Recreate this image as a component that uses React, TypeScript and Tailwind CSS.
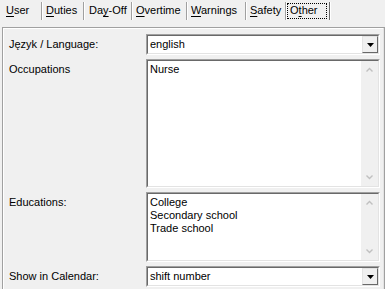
import React from "react";

const U = ({ children }: { children: React.ReactNode }) => <span className="underline underline-offset-[2px]">{children}</span>;

function Tab({ w, pl, children, active }: { w: number; pl: number; children: React.ReactNode; active?: boolean }) {
  return (
    <div className="h-[20px] flex items-center shrink-0" style={{ width: w, paddingLeft: pl }}>
      {active ? (
        <div className="border border-dotted border-black h-[16px] w-[40px] pl-[2px] flex items-center leading-none">{children}</div>
      ) : (
        <span className="leading-none">{children}</span>
      )}
    </div>
  );
}

function Sep({ dark }: { dark?: boolean }) {
  return (
    <div className="flex h-[18px] shrink-0 self-center">
      <div className={dark ? "w-px bg-[#696969]" : "w-px bg-[#a0a0a0]"} />
      <div className="w-px bg-white" />
    </div>
  );
}

function Combo({ text }: { text: string }) {
  return (
    <div className="h-[21px] w-[234px] border-t border-l border-t-[#a0a0a0] border-l-[#a0a0a0] border-b border-r border-b-white border-r-white">
      <div className="h-full w-full border-t border-l border-t-[#696969] border-l-[#696969] border-b border-r border-b-[#e3e3e3] border-r-[#e3e3e3] bg-white flex items-center">
        <div className="flex-1 pl-[2px] leading-none">{text}</div>
        <div className="w-[16px] h-full bg-[#f0f0f0] border-t border-l border-t-[#e3e3e3] border-l-[#e3e3e3] border-b border-r border-b-[#696969] border-r-[#696969] flex items-center justify-center">
          <svg width="7" height="4" viewBox="0 0 7 4"><path d="M0 0H7L3.5 4Z" fill="#000" /></svg>
        </div>
      </div>
    </div>
  );
}

function Chevron({ up }: { up?: boolean }) {
  return (
    <svg width="7" height="5" viewBox="0 0 7 5">
      {up ? (
        <path d="M0.5 4.5L3.5 1.5L6.5 4.5" stroke="#c0c0c0" strokeWidth="1.4" fill="none" />
      ) : (
        <path d="M0.5 0.5L3.5 3.5L6.5 0.5" stroke="#c0c0c0" strokeWidth="1.4" fill="none" />
      )}
    </svg>
  );
}

function ListBox({ h, items }: { h: number; items: string[] }) {
  return (
    <div className="w-[234px] border-t border-l border-t-[#a0a0a0] border-l-[#a0a0a0] border-b border-r border-b-white border-r-white" style={{ height: h }}>
      <div className="h-full w-full border-t border-l border-t-[#696969] border-l-[#696969] border-b border-r border-b-[#e3e3e3] border-r-[#e3e3e3] bg-white flex">
        <div className="flex-1 pl-[2px] pt-[2px] flex flex-col">
          {items.map((t) => (
            <div key={t} className="h-[13px] leading-[13px]">{t}</div>
          ))}
        </div>
        <div className="w-[17px] h-full bg-[#f0f0f0] flex flex-col justify-between">
          <div className="h-[17px] flex items-center justify-center"><Chevron up /></div>
          <div className="h-[17px] flex items-center justify-center"><Chevron /></div>
        </div>
      </div>
    </div>
  );
}

export default function App() {
  return (
    <div className="w-[385px] h-[289px] bg-[#f0f0f0] overflow-hidden text-black text-[11px]" style={{ fontFamily: '"Liberation Sans", Arial, sans-serif' }}>
      <div className="h-[20px] flex items-center pt-[1px]">
        <Tab w={41} pl={6}><U>U</U>ser</Tab>
        <Sep />
        <Tab w={40} pl={3}><U>D</U>uties</Tab>
        <Sep />
        <Tab w={46} pl={4}>Da<U>y</U>-Off</Tab>
        <Sep />
        <Tab w={53} pl={3}><U>O</U>vertime</Tab>
        <Sep />
        <Tab w={57} pl={3}><U>W</U>arnings</Tab>
        <Sep />
        <Tab w={38} pl={3}><U>S</U>afety</Tab>
        <Sep />
        <Tab w={42} pl={0} active>O<U>t</U>her</Tab>
        <Sep dark />
      </div>
      <div className="mt-[7px] ml-[2px] h-[270px] border-t border-l border-[#a0a0a0] flex">
        <div className="border-t border-l border-white flex-1 h-full pt-[5px] pl-[5px] flex flex-col gap-[4px]">
          <div className="flex items-center">
            <div className="w-[137px] leading-none">Język / Language:</div>
            <Combo text="english" />
          </div>
          <div className="flex items-start">
            <div className="w-[137px] pt-[4px] leading-[13px]">Occupations</div>
            <ListBox h={129} items={["Nurse"]} />
          </div>
          <div className="flex items-start">
            <div className="w-[137px] pt-[4px] leading-[13px]">Educations:</div>
            <ListBox h={70} items={["College", "Secondary school", "Trade school"]} />
          </div>
          <div className="flex items-center">
            <div className="w-[137px] leading-none">Show in Calendar:</div>
            <Combo text="shift number" />
          </div>
        </div>
        <div className="w-px h-full bg-[#e3e3e3]" />
        <div className="w-px h-full bg-[#a0a0a0]" />
      </div>
    </div>
  );
}
